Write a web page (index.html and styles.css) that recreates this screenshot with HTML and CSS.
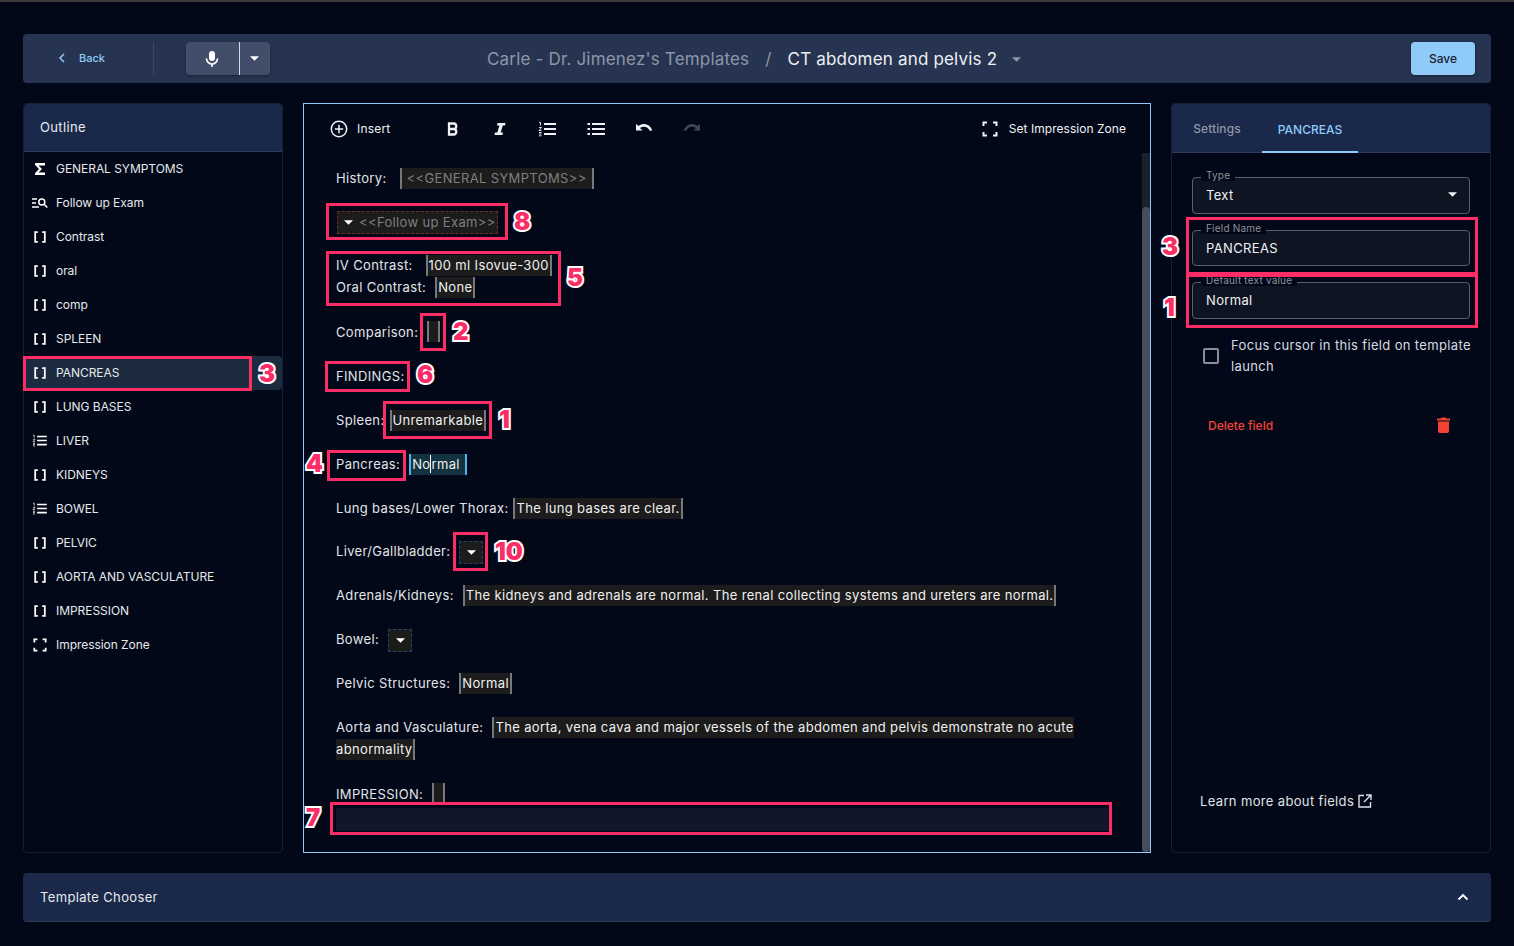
FILE: index.html
```html
<!doctype html>
<html lang="en">
  <head>
    <meta charset="UTF-8" />
    <title>CT abdomen and pelvis 2</title>
    <link rel="stylesheet" href="styles.css">
  </head>
  <body>
    <svg class="sprites" width="0" height="0">
      <symbol id="i-bracket" viewBox="0 0 16 16"><path d="M5.500 2.500H2.500v11H5.500M10.500 2.500h3v11h-3" fill="none" stroke="currentColor" stroke-width="2"/></symbol>
      <symbol id="i-zone" viewBox="0 0 16 16"><path d="M1.500 5V1.500H5M11 1.500h3.500V5M14.500 11v3.500H11M5 14.500H1.500V11" fill="none" stroke="currentColor" stroke-width="2"/></symbol>
      <symbol id="i-ol" viewBox="0 0 18 16"><path d="M6 3h12M6 8h12M6 13h12" stroke="currentColor" stroke-width="2"/><path d="M1 1.500h1.500v3M1 6.500h2.500L1 9.500h2.500M1 11.500h2.500M1 13h2.500M1 14.800h2.500" fill="none" stroke="currentColor" stroke-width=".9"/></symbol>
      <symbol id="i-ul" viewBox="0 0 18 16"><path d="M5 3h13M5 8h13M5 13h13" stroke="currentColor" stroke-width="2"/><path d="M.5 3h2.500M.5 8h2.500M.5 13h2.500" stroke="currentColor" stroke-width="2"/></symbol>
      <symbol id="i-caret" viewBox="0 0 10 5"><path d="M0 0h10L5 5z" fill="currentColor"/></symbol>
    </svg>

    <div class="app">
      <header class="topbar">
        <a class="back"><svg width="8" height="10" viewBox="0 0 8 10"><path d="M6 1 2 5l4 4" fill="none" stroke="currentColor" stroke-width="1.500"/></svg><span>Back</span></a>
        <div class="mic-group">
          <button class="mic-btn">
            <svg width="14" height="18" viewBox="0 0 14 18"><rect x="4" y="1" width="6" height="10" rx="3" fill="currentColor"/><path d="M1.500 8.500a5.500 5.500 0 0 0 11 0M7 14v3" fill="none" stroke="currentColor" stroke-width="1.600"/></svg>
          </button>
          <button class="mic-caret"><svg width="9" height="5"><use href="#i-caret"/></svg></button>
        </div>
        <div class="crumbs">
          <span class="crumb-muted">Carle - Dr. Jimenez's Templates</span>
          <span class="crumb-sep">/</span>
          <span class="crumb-title">CT abdomen and pelvis 2</span>
          <svg class="crumb-caret" width="9" height="5"><use href="#i-caret"/></svg>
        </div>
        <button class="save">Save</button>
      </header>

      <main class="columns">
        <aside class="outline">
          <h2 class="outline-head">Outline</h2>
          <ul class="outline-list">
            <li><svg class="ol-icon" width="14" height="14" viewBox="0 0 14 14"><path d="M2 1h10v2.500H5.500L9 7l-3.500 3.500H12V13H2v-1.800L6 7 2 2.800z" fill="currentColor"/></svg>GENERAL SYMPTOMS</li>
            <li><svg class="ol-icon" width="16" height="12" viewBox="0 0 16 12"><path d="M0 2h5M0 6h4M0 10h7" stroke="currentColor" stroke-width="1.400"/><circle cx="9.800" cy="5" r="3" fill="none" stroke="currentColor" stroke-width="1.500"/><path d="m12 7.200 3.300 3.300" stroke="currentColor" stroke-width="1.600"/></svg>Follow up Exam</li>
            <li><svg class="ol-icon" width="14" height="14"><use href="#i-bracket"/></svg>Contrast</li>
            <li><svg class="ol-icon" width="14" height="14"><use href="#i-bracket"/></svg>oral</li>
            <li><svg class="ol-icon" width="14" height="14"><use href="#i-bracket"/></svg>comp</li>
            <li><svg class="ol-icon" width="14" height="14"><use href="#i-bracket"/></svg>SPLEEN</li>
            <li class="active"><svg class="ol-icon" width="14" height="14"><use href="#i-bracket"/></svg>PANCREAS</li>
            <li><svg class="ol-icon" width="14" height="14"><use href="#i-bracket"/></svg>LUNG BASES</li>
            <li><svg class="ol-icon" width="15" height="13"><use href="#i-ol"/></svg>LIVER</li>
            <li><svg class="ol-icon" width="14" height="14"><use href="#i-bracket"/></svg>KIDNEYS</li>
            <li><svg class="ol-icon" width="15" height="13"><use href="#i-ol"/></svg>BOWEL</li>
            <li><svg class="ol-icon" width="14" height="14"><use href="#i-bracket"/></svg>PELVIC</li>
            <li><svg class="ol-icon" width="14" height="14"><use href="#i-bracket"/></svg>AORTA AND VASCULATURE</li>
            <li><svg class="ol-icon" width="14" height="14"><use href="#i-bracket"/></svg>IMPRESSION</li>
            <li><svg class="ol-icon" width="14" height="14"><use href="#i-zone"/></svg>Impression Zone</li>
          </ul>
        </aside>

        <section class="editor">
          <div class="toolbar">
            <span class="tool-insert">
              <svg width="18" height="18" viewBox="0 0 18 18"><circle cx="9" cy="9" r="7.700" fill="none" stroke="currentColor" stroke-width="1.500"/><path d="M9 4.800v8.400M4.800 9h8.400" stroke="currentColor" stroke-width="1.500"/></svg>
              Insert
            </span>
            <span class="tool-group">
              <span class="tool"><svg width="12" height="14" viewBox="0 0 12 14"><path d="M2 1.500h4.500a2.700 2.700 0 0 1 0 5.500H2zM2 7h5a2.800 2.800 0 0 1 0 5.500H2z" fill="none" stroke="currentColor" stroke-width="2.300"/></svg></span>
              <span class="tool tool-italic"><svg width="12" height="14" viewBox="0 0 12 14"><path d="M3.500 1h8l-.5 2.500H8.800L6.700 10.500H9L8.500 13H.5L1 10.500h2.300l2.100-7H3z" fill="currentColor"/></svg></span>
              <span class="tool tool-ol"><svg width="18" height="16"><use href="#i-ol"/></svg></span>
              <span class="tool tool-ul"><svg width="18" height="16"><use href="#i-ul"/></svg></span>
              <span class="tool"><svg width="18" height="12" viewBox="0 0 18 12"><path d="M0 1v6.500h6.500L4 5c3.500-2.500 8-1.500 10 3l2.300-.8C13.500.8 7.800-.5 2.500 3z" fill="currentColor"/></svg></span>
              <span class="tool tool-off"><svg width="18" height="12" viewBox="0 0 18 12"><path d="M18 1v6.500h-6.500L14 5C10.500 2.500 6 3.500 4 8l-2.300-.8C4.500.8 10.200-.5 15.500 3z" fill="currentColor"/></svg></span>
            </span>
            <span class="tool-zone"><svg width="16" height="16"><use href="#i-zone"/></svg>Set Impression Zone</span>
          </div>

          <div class="doc-wrap">
            <div class="doc">
              <p>History: <span class="field ph gap">&lt;&lt;GENERAL SYMPTOMS&gt;&gt;</span></p>
              <p><span class="pick pick-red ph"><svg width="9" height="5"><use href="#i-caret"/></svg>&lt;&lt;Follow up Exam&gt;&gt;</span></p>
              <p>IV Contrast: <span class="field gap">100 ml Isovue-300</span><br>Oral Contrast: <span class="field gap-s">None</span></p>
              <p>Comparison: <span class="field empty gap-s"></span></p>
              <p>FINDINGS:</p>
              <p>Spleen: <span class="field">Unremarkable</span></p>
              <p>Pancreas: <span class="field current gap-s">No<i class="caret"></i>rmal&nbsp;</span></p>
              <p>Lung bases/Lower Thorax: <span class="field">The lung bases are clear.</span></p>
              <p>Liver/Gallbladder: <span class="pick pick-blue gap-s"><svg width="9" height="5"><use href="#i-caret"/></svg></span></p>
              <p>Adrenals/Kidneys: <span class="field gap-s">The kidneys and adrenals are normal. The renal collecting systems and ureters are normal.</span></p>
              <p>Bowel: <span class="pick pick-blue gap-s"><svg width="9" height="5"><use href="#i-caret"/></svg></span></p>
              <p>Pelvic Structures: <span class="field gap-s">Normal</span></p>
              <p>Aorta and Vasculature: <span class="field gap-s">The aorta, vena cava and major vessels of the abdomen and pelvis demonstrate no acute abnormality</span></p>
              <p class="last">IMPRESSION: <span class="field empty gap-s"></span></p>
              <div class="zone"></div>
            </div>
            <div class="scrollbar"><div class="thumb"></div></div>
          </div>
        </section>

        <aside class="panel">
          <div class="tabs">
            <span class="tab">Settings</span>
            <span class="tab tab-on">PANCREAS</span>
          </div>
          <div class="panel-body">
            <div class="inputs">
              <div class="input input-type"><label>Type</label><span>Text</span><svg width="9" height="5"><use href="#i-caret"/></svg></div>
              <div class="input input-name"><label>Field Name</label><span>PANCREAS</span></div>
              <div class="input input-default"><label>Default text value</label><span>Normal</span></div>
            </div>
            <div class="check-row">
              <i class="checkbox"></i>
              <span>Focus cursor in this field on template launch</span>
            </div>
            <div class="delete-row">
              <span>Delete field</span>
              <svg width="13" height="16" viewBox="0 0 13 16"><path d="M4.500 .5h4l.8 1H13v2H0v-2h3.700zM1 4.500h11V14a2 2 0 0 1-2 2H3a2 2 0 0 1-2-2z" fill="currentColor"/></svg>
            </div>
            <a class="learn">Learn more about fields
              <svg width="14" height="14" viewBox="0 0 14 14"><path d="M6 1.500H1v11.500h11.500V8M8 1h5v5M13 1 6 8" fill="none" stroke="currentColor" stroke-width="1.400"/></svg>
            </a>
          </div>
        </aside>
      </main>

      <footer class="chooser">
        <span>Template Chooser</span>
        <svg width="12" height="8" viewBox="0 0 12 8"><path d="M1.500 6.500 6 2l4.500 4.500" fill="none" stroke="currentColor" stroke-width="1.800"/></svg>
      </footer>
    </div>

    <!-- red review marks drawn over the screenshot -->
    <div class="mark m-side"></div><b class="num n-side">3</b>
    <div class="mark m-follow"></div><b class="num n-follow">8</b>
    <div class="mark m-contrast"></div><b class="num n-contrast">5</b>
    <div class="mark m-comp"></div><b class="num n-comp">2</b>
    <div class="mark m-find"></div><b class="num n-find">6</b>
    <div class="mark m-spleen"></div><b class="num n-spleen">1</b>
    <div class="mark m-pan"></div><b class="num n-pan">4</b>
    <div class="mark m-liver"></div><b class="num n-liver">10</b>
    <div class="mark m-zone"></div><b class="num n-zone">7</b>
    <div class="mark m-name"></div><b class="num n-name">3</b>
    <div class="mark m-default"></div><b class="num n-default">1</b>
  </body>
</html>
```

FILE: styles.css
```css
* {
  box-sizing: border-box;
}

html,
body {
  height: 100%;
}

body {
  margin: 0;
  background: #020817;
  border-top: 2px solid #3a3a3c;
  color: #e6e8ec;
  font-family: Inter, "Liberation Sans", sans-serif;
  font-size: 13px;
  letter-spacing: 0.35px;
  overflow: hidden;
  position: relative;
}

.sprites {
  position: absolute;
}

.app {
  padding: 32px 23px 0;
  display: flex;
  flex-direction: column;
  gap: 20px;
}

/* top bar */
.topbar {
  height: 49px;
  background: #273451;
  border-radius: 4px;
  display: flex;
  align-items: center;
  padding: 0 16px 0 0;
}

.back {
  width: 131px;
  height: 33px;
  padding: 0 0 2px 35px;
  display: flex;
  align-items: center;
  gap: 13px;
  font-size: 11px;
  font-weight: 500;
  letter-spacing: 0;
  color: #90caf9;
  border-right: 1px solid #3b4762;
}

.mic-group {
  margin-left: 32px;
  display: flex;
  height: 33px;
  border-radius: 4px;
  overflow: hidden;
  box-shadow: 0 1px 3px rgba(0, 0, 0, 0.4);
}

.mic-group button {
  border: 0;
  background: #424e69;
  color: #fff;
  padding: 0 2px 0 0;
  display: flex;
  align-items: center;
  justify-content: center;
}

.mic-btn {
  width: 54px;
  border-right: 1px solid #d5d8de !important;
}

.mic-caret {
  width: 30px;
}

.crumbs {
  flex: 1;
  display: flex;
  align-items: center;
  padding: 1px 0 0 217px;
  font-size: 17px;
  letter-spacing: 0.18px;
}

.crumb-muted {
  color: #8e96a6;
}

.crumb-sep {
  color: #8e96a6;
  margin: 0 16px;
}

.crumb-title {
  color: #eef0f3;
}

.crumb-caret {
  margin-left: 15px;
  color: #8e96a6;
}

.save {
  width: 64px;
  height: 33px;
  border: 0;
  border-radius: 4px;
  background: #90caf9;
  color: #14202e;
  font: 500 12px Inter, "Liberation Sans", sans-serif;
  box-shadow: 0 1px 3px rgba(0, 0, 0, 0.4);
}

/* three columns */
.columns {
  height: 750px;
  display: flex;
  gap: 20px;
}

.outline {
  width: 260px;
  border: 1px solid #161f33;
  border-radius: 4px;
}

.outline-head {
  margin: 0;
  height: 48px;
  padding: 0 16px 2px;
  display: flex;
  align-items: center;
  background: #1a294a;
  border-bottom: 1px solid #2f3c59;
  font-size: 13px;
  font-weight: 400;
  border-radius: 4px 4px 0 0;
}

.outline-list {
  list-style: none;
  margin: 0;
  padding: 0;
}

.outline-list li {
  height: 34px;
  display: flex;
  align-items: center;
  font-size: 12px;
  letter-spacing: -0.05px;
  color: #e6e8ec;
  position: relative;
  padding: 0 0 1px 32px;
}

.outline-list li.active {
  background: #1c2b40;
  border-radius: 4px;
}

.ol-icon {
  position: absolute;
  left: 8px;
  color: #fff;
}

.outline-list li .ol-icon[width="14"] {
  left: 9px;
}

.editor {
  width: 848px;
  border: 1px solid #90caf9;
  display: flex;
  flex-direction: column;
}

.toolbar {
  height: 49px;
  padding: 0 24px 0 26px;
  display: flex;
  align-items: center;
  color: #f0f1f4;
  flex: none;
}

.tool-insert {
  display: flex;
  align-items: center;
  gap: 9px;
  font-size: 12px;
  letter-spacing: 0.2px;
  width: 99px;
}

.tool-group {
  display: flex;
  align-items: center;
  flex: 1;
}

.tool {
  width: 48px;
  display: flex;
  justify-content: center;
}

.tool-italic {
  padding-right: 2px;
}

.tool-ol {
  padding-right: 4px;
}

.tool-ul {
  padding-right: 2px;
}

.tool-off {
  padding-right: 5px;
  color: #3e4657;
}

.tool-zone {
  display: flex;
  align-items: center;
  gap: 11px;
  font-size: 12px;
  letter-spacing: 0.04px;
}

.doc-wrap {
  flex: 1;
  display: flex;
  min-height: 0;
}

.doc {
  flex: 1;
  padding: 14.6px 32px 0;
  line-height: 21.93px;
  color: #e3e5e9;
  overflow: hidden;
}

.doc p {
  margin: 0 0 21.93px;
}

.doc p.last {
  margin-bottom: 0;
}

.field {
  background: #1c1c1c;
  border-left: 2px solid #77787a;
  border-right: 2px solid #77787a;
  padding: 2px 1px 3px 1px;
  margin-left: 1px;
  color: #f0f0f0;
}

.field.ph,
.pick.ph {
  color: #7f7f7f;
}

.field.ph {
  padding: 2px 5px 3px;
}

.field.gap {
  margin-left: 9px;
}

.field.gap-s,
.pick.gap-s {
  margin-left: 5px;
}

.field.empty {
  display: inline-block;
  width: 13px;
  height: 21px;
  vertical-align: -5px;
  padding: 0;
}

.field.current {
  background: #12333f;
  border-color: #4fb3e8;
}

.caret {
  display: inline-block;
  width: 1px;
  height: 18px;
  background: #fff;
  vertical-align: -4px;
}

.pick {
  display: inline-flex;
  align-items: center;
  background: #1c1c1c;
  height: 23px;
  margin-bottom: -1px;
  color: #fff;
  vertical-align: top;
}

.pick-red {
  border: 1px dashed #6d2a30;
  margin-left: 1px;
  padding: 0 1px 0 6px;
  gap: 6px;
}

.pick-red svg {
  color: #fff;
}

.pick-blue {
  border: 1px dashed #2e3f63;
  width: 24px;
  justify-content: center;
}

.zone {
  height: 23px;
  background: #11172a;
  margin-top: 2.3px;
}

.scrollbar {
  width: 8px;
  background: #1a202c;
  position: relative;
  flex: none;
}

.thumb {
  position: absolute;
  top: 54px;
  bottom: 0;
  left: 0;
  right: 0;
  background: #474d5b;
  border-radius: 4px;
}

/* right panel */
.panel {
  flex: 1;
  border: 1px solid #161f33;
  border-radius: 4px;
  display: flex;
  flex-direction: column;
}

.tabs {
  height: 49px;
  display: flex;
  background: #1a294a;
  border-bottom: 1px solid #2f3c59;
  border-radius: 4px 4px 0 0;
  flex: none;
}

.tab {
  width: 90px;
  display: flex;
  align-items: center;
  justify-content: center;
  font-size: 12px;
  letter-spacing: 0.1px;
  font-weight: 500;
  color: #8e96a6;
}

.tab-on {
  width: 96px;
  padding-top: 3px;
  letter-spacing: 0;
  color: #90caf9;
  border-bottom: 2px solid #90caf9;
  margin-bottom: -1px;
}

.panel-body {
  flex: 1;
  padding: 24px 20px 0;
  display: flex;
  flex-direction: column;
}

.inputs {
  display: flex;
  flex-direction: column;
}

.input {
  height: 36px;
  border: 1px solid #5a5f69;
  border-radius: 4px;
  background: #0e1422;
  padding: 0 12px 2px 13px;
  display: flex;
  align-items: center;
  justify-content: space-between;
  position: relative;
  color: #f0f1f4;
}

.input-type {
  height: 37px;
}

.input-name {
  margin-top: 16px;
  padding-bottom: 0;
}

.input-default {
  margin-top: 16px;
  height: 37px;
}

.input label {
  position: absolute;
  top: -9px;
  left: 8px;
  padding: 0 5px;
  font-size: 10px;
  line-height: 12px;
  letter-spacing: 0.2px;
  color: #8e929b;
  background: #020817;
}

.check-row {
  margin: 16px -8px 0 0;
  padding: 0 0 0 11px;
  display: flex;
  align-items: center;
  gap: 12px;
  line-height: 21px;
  color: #d9dbe0;
}

.checkbox {
  flex: none;
  width: 16px;
  height: 16px;
  border: 2px solid #8a8d94;
  border-radius: 2px;
}

.delete-row {
  margin-top: 40px;
  padding: 0 20px 0 16px;
  display: flex;
  align-items: center;
  justify-content: space-between;
  color: #f44336;
  font-size: 12px;
  letter-spacing: 0;
  font-weight: 500;
}

.learn {
  margin-top: auto;
  margin-bottom: 43px;
  padding-left: 8px;
  display: flex;
  align-items: center;
  gap: 4px;
  color: #e0e2e6;
}

/* bottom bar */
.chooser {
  height: 49px;
  padding: 0 22px 0 17px;
  display: flex;
  align-items: center;
  justify-content: space-between;
  background: #1a294a;
  border-bottom: 1px solid #2f3c59;
  border-radius: 4px;
  color: #e6e8ec;
}

.chooser svg {
  color: #fff;
}

/* review marks, these sit on top of everything */
.mark {
  position: absolute;
  border: 3px solid #fb2c66;
  pointer-events: none;
}

.num {
  position: absolute;
  font: 900 24px/28px Inter, "Liberation Sans", sans-serif;
  letter-spacing: 0;
  color: #fb2c66;
  -webkit-text-stroke: 4px #fff;
  paint-order: stroke fill;
}

/* body has a 2px top border, so tops here are screen y minus 2 */
.m-side { left: 23px; top: 354px; width: 229px; height: 35px; }
.n-side { left: 259px; top: 358px; }
.m-follow { left: 326px; top: 201px; width: 182px; height: 37px; }
.n-follow { left: 514px; top: 206px; }
.m-contrast { left: 326px; top: 249px; width: 235px; height: 55px; }
.n-contrast { left: 567px; top: 262px; }
.m-comp { left: 420px; top: 311px; width: 26px; height: 38px; }
.n-comp { left: 453px; top: 316px; }
.m-find { left: 325px; top: 359px; width: 85px; height: 31px; }
.n-find { left: 417px; top: 359px; }
.m-spleen { left: 383px; top: 399px; width: 109px; height: 38px; }
.n-spleen { left: 499px; top: 404px; }
.m-pan { left: 327px; top: 448px; width: 79px; height: 31px; }
.n-pan { left: 306px; top: 448px; }
.m-liver { left: 453px; top: 530px; width: 35px; height: 39px; }
.n-liver { left: 495px; top: 536px; }
.m-zone { left: 330px; top: 800px; width: 782px; height: 33px; }
.n-zone { left: 306px; top: 802px; }
.m-name { left: 1186px; top: 215px; width: 292px; height: 58px; }
.n-name { left: 1162px; top: 231px; }
.m-default { left: 1186px; top: 272px; width: 292px; height: 54px; }
.n-default { left: 1164px; top: 292px; }
```
